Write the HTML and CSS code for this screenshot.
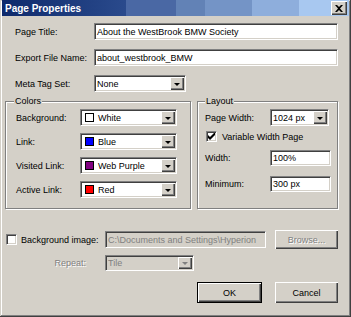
FILE: index.html
```html
<html lang="en">
<head>
  <meta charset="UTF-8">
  <title>Page Properties</title>
  <link rel="stylesheet" href="styles.css">
</head>
<body>
  <div class="window">
    <div class="titlebar">
      <span class="title">Page Properties</span>
      <span class="close">
        <svg width="8" height="7" viewBox="0 0 8 7"><path d="M0 0h2l2 2 2-2h2L5 3.5 8 7H6L4 5 2 7H0l3-3.5z" fill="#000"/></svg>
      </span>
    </div>

    <div class="content">
      <div class="row">
        <span class="label">Page Title:</span>
        <div class="field wide">About the WestBrook BMW Society</div>
      </div>
      <div class="row">
        <span class="label">Export File Name:</span>
        <div class="field wide">about_westbrook_BMW</div>
      </div>
      <div class="row">
        <span class="label">Meta Tag Set:</span>
        <div class="select meta"><span class="val">None</span><span class="drop"><i></i></span></div>
      </div>

      <div class="groups">
        <div class="group colors">
          <span class="legend">Colors</span>
          <div class="grow">
            <span class="glabel">Background:</span>
            <div class="select color"><span class="val"><b class="swatch" style="background:#fff"></b>White</span><span class="drop"><i></i></span></div>
          </div>
          <div class="grow">
            <span class="glabel">Link:</span>
            <div class="select color"><span class="val"><b class="swatch" style="background:#0000ff"></b>Blue</span><span class="drop"><i></i></span></div>
          </div>
          <div class="grow">
            <span class="glabel">Visited Link:</span>
            <div class="select color"><span class="val"><b class="swatch" style="background:#800080"></b>Web Purple</span><span class="drop"><i></i></span></div>
          </div>
          <div class="grow">
            <span class="glabel">Active Link:</span>
            <div class="select color"><span class="val"><b class="swatch" style="background:#ff0000"></b>Red</span><span class="drop"><i></i></span></div>
          </div>
        </div>

        <div class="group layout">
          <span class="legend">Layout</span>
          <div class="lrow">
            <span class="llabel">Page Width:</span>
            <div class="select pw"><span class="val">1024 px</span><span class="drop"><i></i></span></div>
          </div>
          <div class="crow">
            <span class="check">
              <svg width="7" height="7" viewBox="0 0 7 7"><path d="M0 2v3l2 2 5-5V-1L2 4z" fill="#000"/></svg>
            </span>
            <span>Variable Width Page</span>
          </div>
          <div class="lrow small">
            <span class="llabel">Width:</span>
            <div class="field num">100%</div>
          </div>
          <div class="lrow small min">
            <span class="llabel">Minimum:</span>
            <div class="field num">300 px</div>
          </div>
        </div>
      </div>

      <div class="bgrow">
        <span class="check"></span>
        <span class="bglabel">Background image:</span>
        <div class="field path disabled">C:\Documents and Settings\Hyperion</div>
        <span class="button disabled browse">Browse...</span>
      </div>
      <div class="reprow">
        <span class="replabel disabled-text">Repeat:</span>
        <div class="select repeat disabled"><span class="val">Tile</span><span class="drop"><i></i></span></div>
      </div>

      <div class="buttons">
        <span class="button default">OK</span>
        <span class="button">Cancel</span>
      </div>
    </div>
  </div>
</body>
</html>
```

FILE: styles.css
```css
* {
  box-sizing: border-box;
}

body {
  margin: 0;
  font-family: "Liberation Sans", Arial, sans-serif;
  font-size: 9px;
  color: #000;
  white-space: nowrap;
}

.window {
  width: 351px;
  height: 317px;
  background-color: #d4d0c8;
  box-shadow: inset -1px -1px #404040, inset 1px 1px #d4d0c8, inset -2px -2px #808080, inset 2px 2px #fff;
}

.titlebar {
  height: 16px;
  margin: 0 2px;
  padding: 0 2px 0 3px;
  display: flex;
  align-items: center;
  justify-content: space-between;
  background: linear-gradient(to right, #0e2a6c 0, #2a4a8c 124px, #4a68a4 124px, #4a68a4 174px, #6282b6 174px, #6282b6 203px, #7494c6 203px, #7494c6 250px, #8eaedc 250px, #8eaedc 297px, #a8c8f0 297px);
}

.title {
  color: #fff;
  font-weight: bold;
  font-size: 10px;
}

.close {
  width: 16px;
  height: 14px;
  display: flex;
  align-items: center;
  justify-content: center;
  background-color: #d4d0c8;
  box-shadow: inset 1px 1px #fff, inset -1px -1px #404040, inset -2px -2px #808080;
}

.content {
  padding: 7px 13px 0 5px;
}

/* top rows */
.row {
  display: flex;
  align-items: center;
  height: 17px;
  margin-bottom: 9px;
  padding-left: 10px;
}

.row .label {
  width: 79px;
}

.field {
  height: 17px;
  padding: 0 2px;
  display: flex;
  align-items: center;
  background-color: #fff;
  border: 1px solid;
  border-color: #808080 #fff #fff #808080;
  box-shadow: inset 1px 1px #404040, inset -1px -1px #d4d0c8;
  overflow: hidden;
}

.wide {
  flex: 1;
}

.select {
  height: 17px;
  padding: 1px;
  display: flex;
  background-color: #fff;
  border: 1px solid;
  border-color: #808080 #fff #fff #808080;
  box-shadow: inset 1px 1px #404040, inset -1px -1px #d4d0c8;
}

.select .val {
  flex: 1;
  display: flex;
  align-items: center;
  padding-left: 1px;
  overflow: hidden;
}

.select .drop {
  width: 14px;
  display: flex;
  align-items: center;
  justify-content: center;
  background-color: #d4d0c8;
  box-shadow: inset 1px 1px #fff, inset -1px -1px #404040, inset -2px -2px #808080;
}

.select .drop i {
  width: 0;
  height: 0;
  border-left: 3px solid transparent;
  border-right: 3px solid transparent;
  border-top: 3px solid #000;
  margin-top: 1px;
}

.meta {
  width: 92px;
}

/* group boxes */
.groups {
  display: flex;
  gap: 6px;
  margin-top: 4px;
}

.group {
  position: relative;
  height: 108px;
  border: 1px solid #808080;
  box-shadow: inset 1px 1px #fff, 1px 1px #fff;
  padding-top: 7px;
}

.legend {
  position: absolute;
  top: -7px;
  padding: 0 1px;
  background-color: #d4d0c8;
  line-height: 12px;
}

.colors {
  width: 186px;
  padding-left: 10px;
}

.colors .legend {
  left: 8px;
}

.grow {
  display: flex;
  align-items: center;
  height: 17px;
  margin-bottom: 7px;
}

.glabel {
  width: 64px;
}

.color {
  width: 97px;
}

.swatch {
  width: 9px;
  height: 9px;
  margin: 0 4px 0 2px;
  border: 1px solid #000;
}

.layout {
  flex: 1;
  padding-left: 7px;
}

.layout .legend {
  left: 7px;
}

.lrow {
  display: flex;
  align-items: center;
  height: 17px;
}

.llabel {
  width: 65px;
}

.pw {
  width: 59px;
}

.crow {
  display: flex;
  align-items: center;
  gap: 5px;
  margin-top: 5px;
  height: 11px;
  padding-left: 1px;
}

.check {
  width: 11px;
  height: 11px;
  display: flex;
  align-items: center;
  justify-content: center;
  background-color: #fff;
  border: 1px solid;
  border-color: #808080 #fff #fff #808080;
  box-shadow: inset 1px 1px #404040, inset -1px -1px #d4d0c8;
}

.small {
  height: 16px;
  margin-top: 8px;
}

.small.min {
  margin-top: 10px;
}

.num {
  width: 61px;
  height: 16px;
}

/* bottom */
.bgrow {
  display: flex;
  align-items: center;
  height: 19px;
  margin-top: 21px;
  padding-left: 1px;
}

.bglabel {
  width: 84px;
  margin-left: 4px;
}

.path {
  width: 161px;
  margin-right: 9px;
}

.disabled {
  background-color: #d4d0c8;
  color: #808080;
}

.disabled-text {
  color: #808080;
  text-shadow: 1px 1px #fff;
}

.reprow {
  display: flex;
  align-items: center;
  height: 16px;
  margin-top: 6px;
}

.replabel {
  width: 100px;
  padding-right: 19px;
  text-align: right;
}

.repeat {
  width: 89px;
  height: 16px;
}

.repeat .drop i {
  border-top-color: #808080;
}

.button {
  height: 19px;
  display: flex;
  align-items: center;
  justify-content: center;
  background-color: #d4d0c8;
  box-shadow: inset 1px 1px #fff, inset -1px -1px #404040, inset -2px -2px #808080;
}

.browse {
  width: 63px;
  color: #808080;
  text-shadow: 1px 1px #fff;
}

.buttons {
  display: flex;
  justify-content: flex-end;
  gap: 13px;
  margin-top: 11px;
}

.buttons .button {
  width: 63px;
  height: 21px;
}

.buttons .default {
  width: 65px;
  border: 1px solid #000;
}
```
